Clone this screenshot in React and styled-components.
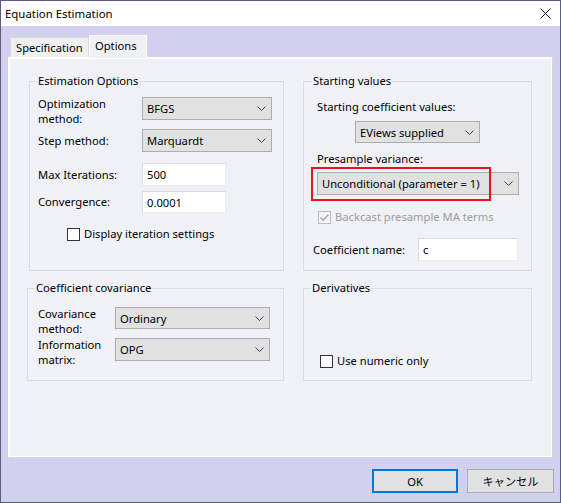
import React from 'react';
import styled, {createGlobalStyle} from 'styled-components';

const GlobalStyle = createGlobalStyle`
  html, body {
    margin: 0;
    padding: 0;
    background: #45455a;
  }
  body {
    font-family: "Noto Sans", "Noto Sans CJK JP", sans-serif;
    font-size: 11.2px;
    color: #000;
  }
  * {
    box-sizing: border-box;
  }
`;

const Window = styled.div`
  width: 561px;
  height: 503px;
  border: 1px solid #5c5c80;
  background: #d1d0ee;
  display: flex;
  flex-direction: column;
`;

const TitleBar = styled.div`
  height: 25px;
  flex: 0 0 auto;
  background: #fff;
  display: flex;
  align-items: center;
  justify-content: space-between;
  padding: 0 9px 0 4px;
  font-size: 11.4px;
`;

const Body = styled.div`
  flex: 1;
  display: flex;
  flex-direction: column;
  padding: 8px 7px 0 7px;
`;

const TabStrip = styled.div`
  height: 23px;
  display: flex;
  align-items: flex-end;
  padding-left: 2px;
`;

const Tab = styled.div`
  width: ${p => p.$w}px;
  height: ${p => (p.$active ? 23 : 20)}px;
  padding-left: 5px;
  padding-bottom: ${p => (p.$active ? 3 : 0)}px;
  display: flex;
  align-items: center;
  background: ${p => (p.$active ? '#f0f1f6' : '#f0f0f0')};
  border: 1px solid ${p => (p.$active ? '#fff' : '#d9d9d9')};
  border-bottom: none;
  margin-bottom: ${p => (p.$active ? -1 : 0)}px;
  position: relative;
  z-index: ${p => (p.$active ? 1 : 0)};
  white-space: nowrap;
`;

const Panel = styled.div`
  height: 401px;
  background: #f0f1f6;
  border: 1px solid #fff;
  border-right-color: #d6d6d6;
  border-bottom-color: #d6d6d6;
  box-shadow: inset 1px 1px 0 #fff, inset -1px -1px 0 #fff;
  padding: 15px 0 0 18px;
  display: grid;
  grid-template-columns: 257px 229px;
  grid-template-rows: 198px 101px;
  column-gap: 19px;
  row-gap: 9px;
`;

const Group = styled.fieldset`
  margin: 0 0 0 ${p => p.$indent || 0}px;
  padding: 0 0 0 ${p => p.$pad || 8}px;
  border: 1px solid #dcdcdc;
  min-width: 0;
  display: flex;
  flex-direction: column;
`;

const Legend = styled.legend`
  margin-left: ${p => p.$left || -1}px;
  padding: 0 1px;
  line-height: 16px;
`;

const Row = styled.div`
  display: flex;
  align-items: ${p => (p.$start ? 'flex-start' : 'center')};
  margin-top: ${p => p.$top || 0}px;
  margin-left: ${p => p.$left || 0}px;
  justify-content: ${p => (p.$center ? 'center' : 'flex-start')};
`;

const Label = styled.div`
  width: ${p => p.$w}px;
  flex: 0 0 auto;
  line-height: ${p => (p.$two ? 15 : 16)}px;
  margin-top: ${p => p.$top || 0}px;
`;

const Text = styled.div`
  line-height: 16px;
  white-space: nowrap;
  color: ${p => (p.$disabled ? '#9c9c9c' : '#000')};
`;

const SelectBox = styled.div`
  width: ${p => p.$w}px;
  height: ${p => p.$h || 23}px;
  margin-top: ${p => p.$top || 0}px;
  background: #e1e1e1;
  border: 1px solid #adadad;
  display: flex;
  align-items: center;
  justify-content: space-between;
  padding: 0 5px 0 4px;
  white-space: nowrap;
`;

const TextBox = styled.div`
  width: ${p => p.$w}px;
  height: ${p => p.$h || 23}px;
  background: #fff;
  border: 1px solid #ececf0;
  border-left-color: #dcdce0;
  border-top-color: #dcdce0;
  display: flex;
  align-items: center;
  padding-left: 4px;
`;

const Check = styled.div`
  width: 13px;
  height: 13px;
  flex: 0 0 auto;
  border: 1px solid ${p => (p.$disabled ? '#bcbcbc' : '#333')};
  background: ${p => (p.$disabled ? '#f4f4f4' : '#fff')};
  margin-right: 4px;
  display: flex;
  align-items: center;
  justify-content: center;
`;

const Anchor = styled.div`
  position: relative;
`;

const Highlight = styled.div`
  position: absolute;
  left: -6px;
  top: -5px;
  width: 180px;
  height: 34px;
  border: 2px solid #e8141c;
  pointer-events: none;
`;

const ButtonRow = styled.div`
  display: flex;
  justify-content: flex-end;
  gap: 9px;
  margin-top: 11px;
  margin-right: -1px;
`;

const Button = styled.div`
  width: ${p => p.$w}px;
  height: 24px;
  background: #e1e1e1;
  border: ${p => (p.$primary ? '2px solid #0078d7' : '1px solid #adadad')};
  display: flex;
  align-items: center;
  justify-content: center;
`;

const Chevron = () => (
  <svg width="9" height="5" viewBox="0 0 9 5">
    <polyline points="0.5,0.5 4.5,4.5 8.5,0.5" fill="none" stroke="#444" strokeWidth="1" />
  </svg>
);

const CloseIcon = () => (
  <svg width="11" height="11" viewBox="0 0 11 11">
    <path d="M0.5 0.5 L10.5 10.5 M10.5 0.5 L0.5 10.5" stroke="#111" strokeWidth="1" />
  </svg>
);

const CheckMark = () => (
  <svg width="11" height="11" viewBox="0 0 11 11">
    <polyline points="1.5,5.5 4.2,8.2 9.5,2.5" fill="none" stroke="#a6a6a6" strokeWidth="1.4" />
  </svg>
);

const Select = ({w, h, top, children}) => (
  <SelectBox $w={w} $h={h} $top={top}>
    <span>{children}</span>
    <Chevron />
  </SelectBox>
);

export default function App() {
  return (
    <>
      <GlobalStyle />
      <Window>
        <TitleBar>
          <span>Equation Estimation</span>
          <CloseIcon />
        </TitleBar>
        <Body>
          <TabStrip>
            <Tab $w={79}>Specification</Tab>
            <Tab $w={58} $active>Options</Tab>
          </TabStrip>
          <Panel>
            <Group $indent={2}>
              <Legend>Estimation Options</Legend>
              <Row $start $top={8}>
                <Label $w={104} $two $top={-1}>Optimization<br />method:</Label>
                <Select w={130}>BFGS</Select>
              </Row>
              <Row $top={3}>
                <Label $w={104}>Step method:</Label>
                <Select w={130}>Marquardt</Select>
              </Row>
              <Row $top={11}>
                <Label $w={104}>Max Iterations:</Label>
                <TextBox $w={84}>500</TextBox>
              </Row>
              <Row $top={5}>
                <Label $w={104}>Convergence:</Label>
                <TextBox $w={84} $h={22}>0.0001</TextBox>
              </Row>
              <Row $top={13} $left={29}>
                <Check />
                <Text>Display iteration settings</Text>
              </Row>
            </Group>

            <Group $pad={9}>
              <Legend>Starting values</Legend>
              <Row $top={10} $left={4}>
                <Text>Starting coefficient values:</Text>
              </Row>
              <Row $top={6} $center style={{marginLeft: -9}}>
                <Select w={125} h={22}>EViews supplied</Select>
              </Row>
              <Row $top={8} $left={4}>
                <Text>Presample variance:</Text>
              </Row>
              <Row $top={5} $left={4}>
                <Anchor>
                  <Select w={202}>Unconditional (parameter = 1)</Select>
                  <Highlight />
                </Anchor>
              </Row>
              <Row $top={14} $left={5}>
                <Check $disabled>
                  <CheckMark />
                </Check>
                <Text $disabled>Backcast presample MA terms</Text>
              </Row>
              <Row $top={13}>
                <Label $w={105}>Coefficient name:</Label>
                <TextBox $w={100}>c</TextBox>
              </Row>
            </Group>

            <Group $pad={10}>
              <Legend $left={-3}>Coefficient covariance</Legend>
              <Row $start $top={10}>
                <Label $w={77} $two>Covariance<br />method:</Label>
                <Select w={155} h={22} top={1}>Ordinary</Select>
              </Row>
              <Row $start $top={1}>
                <Label $w={77} $two>Information<br />matrix:</Label>
                <Select w={155} top={1}>OPG</Select>
              </Row>
            </Group>

            <Group $pad={16}>
              <Legend $left={-9}>Derivatives</Legend>
              <Row $top={57}>
                <Check />
                <Text>Use numeric only</Text>
              </Row>
            </Group>
          </Panel>
          <ButtonRow>
            <Button $w={86} $primary>OK</Button>
            <Button $w={87}>キャンセル</Button>
          </ButtonRow>
        </Body>
      </Window>
    </>
  );
}
